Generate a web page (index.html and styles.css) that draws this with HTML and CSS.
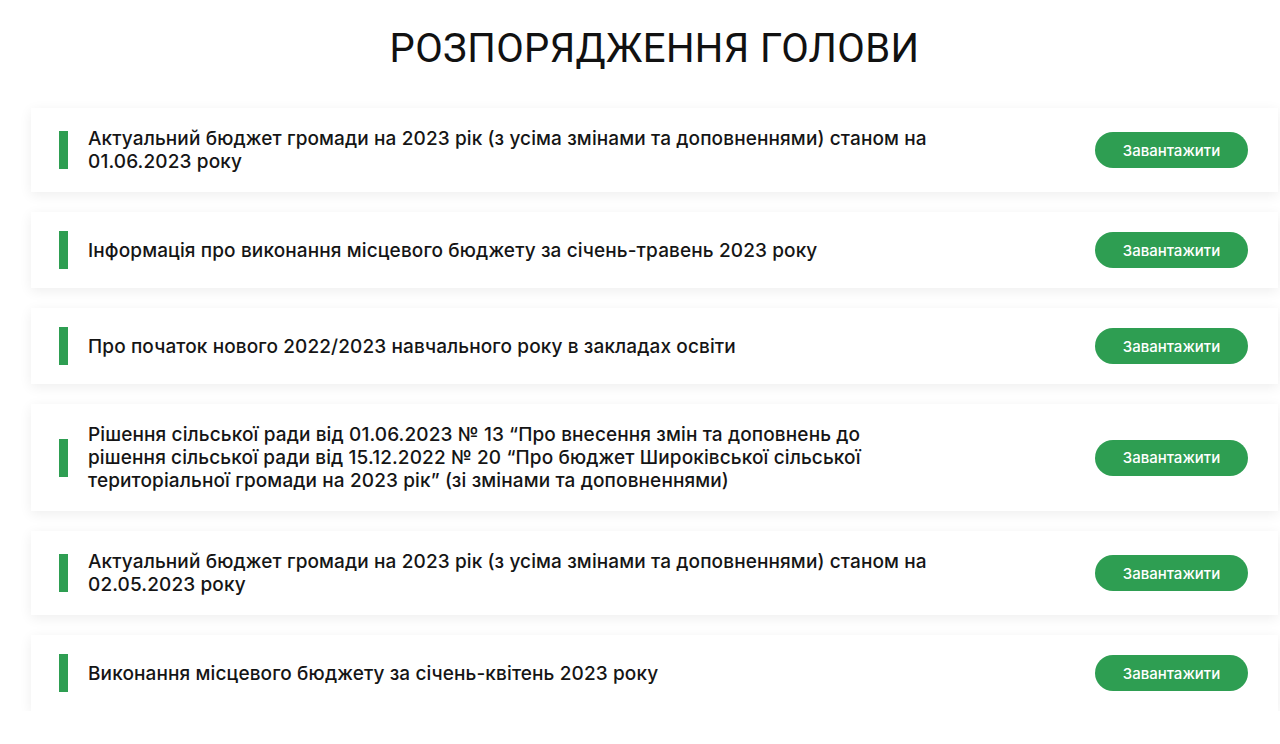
FILE: index.html
```html
<!DOCTYPE html>
<html lang="uk">
<head>
<meta charset="utf-8">
<title>Розпорядження голови</title>
<link rel="stylesheet" href="styles.css">
</head>
<body>
<main class="page">
  <h1 class="title">РОЗПОРЯДЖЕННЯ ГОЛОВИ</h1>
  <ul class="docs">
    <li class="doc">
      <span class="mark"></span>
      <p class="doc-text">Актуальний бюджет громади на 2023 рік (з усіма змінами та доповненнями) станом на 01.06.2023 року</p>
      <a class="btn" href="#">Завантажити</a>
    </li>
    <li class="doc">
      <span class="mark"></span>
      <p class="doc-text">Інформація про виконання місцевого бюджету за січень-травень 2023 року</p>
      <a class="btn" href="#">Завантажити</a>
    </li>
    <li class="doc">
      <span class="mark"></span>
      <p class="doc-text">Про початок нового 2022/2023 навчального року в закладах освіти</p>
      <a class="btn" href="#">Завантажити</a>
    </li>
    <li class="doc">
      <span class="mark"></span>
      <p class="doc-text">Рішення сільської ради від 01.06.2023 № 13 “Про внесення змін та доповнень до рішення сільської ради від 15.12.2022 № 20 “Про бюджет Широківської сільської територіальної громади на 2023 рік” (зі змінами та доповненнями)</p>
      <a class="btn" href="#">Завантажити</a>
    </li>
    <li class="doc">
      <span class="mark"></span>
      <p class="doc-text">Актуальний бюджет громади на 2023 рік (з усіма змінами та доповненнями) станом на 02.05.2023 року</p>
      <a class="btn" href="#">Завантажити</a>
    </li>
    <li class="doc">
      <span class="mark"></span>
      <p class="doc-text">Виконання місцевого бюджету за січень-квітень 2023 року</p>
      <a class="btn" href="#">Завантажити</a>
    </li>
  </ul>
</main>
</body>
</html>
```

FILE: styles.css
```css
* { box-sizing: border-box; }

html, body {
  margin: 0;
  padding: 0;
  background: #ffffff;
}

body {
  font-family: Inter, "Noto Sans", "DejaVu Sans", sans-serif;
  color: #111111;
}

.page {
  margin: 0 2px 0 31px;
  padding-top: 26px;
}

.title {
  margin: 0 0 36px;
  text-align: center;
  font-family: Roboto, "Liberation Sans", sans-serif;
  font-weight: 400;
  font-size: 40px;
  line-height: 46px;
  color: #111111;
  letter-spacing: 0.4px;
}

.docs {
  list-style: none;
  margin: 0;
  padding: 0;
  display: flex;
  flex-direction: column;
  gap: 20px;
}

.doc {
  display: flex;
  align-items: center;
  padding: 19px 30px 19px 28px;
  background: #ffffff;
  box-shadow: 0 3px 12px rgba(0, 0, 0, 0.07);
}

.mark {
  flex: none;
  width: 9px;
  height: 38px;
  background: #2e9e52;
  margin-right: 20px;
}

.doc-text {
  margin: 0;
  flex: 0 1 845px;
  font-size: 19px;
  line-height: 23px;
  font-weight: 500;
  letter-spacing: 0.12px;
  color: #151515;
}

.btn {
  flex: none;
  margin-left: auto;
  width: 153px;
  height: 36px;
  border-radius: 18px;
  background: #2e9e52;
  color: #ffffff;
  text-decoration: none;
  font-size: 15px;
  font-weight: 500;
  display: flex;
  align-items: center;
  justify-content: center;
}
```
